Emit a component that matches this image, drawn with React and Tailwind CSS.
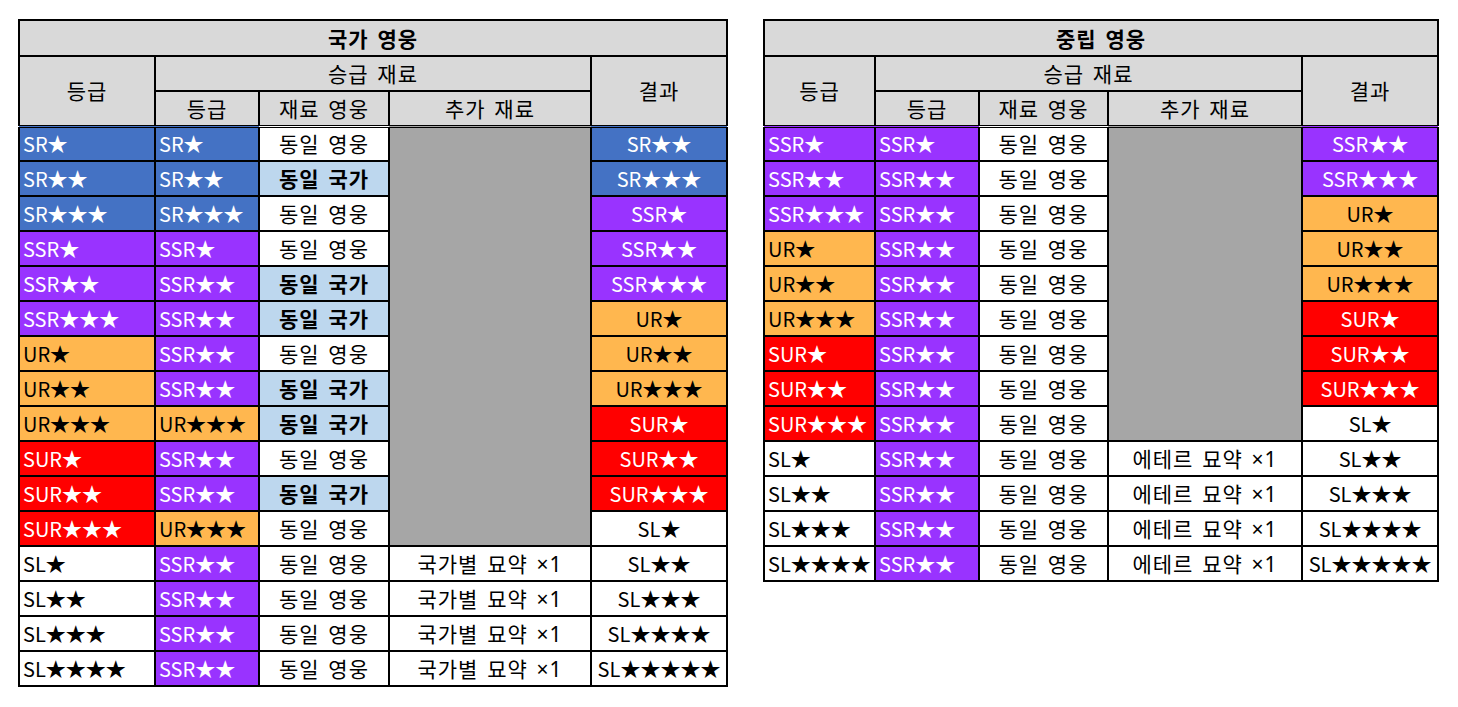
const BLUE = "bg-[#4472c4] text-white";
const PURPLE = "bg-[#9933ff] text-white";
const ORANGE = "bg-[#ffb74f] text-black";
const RED = "bg-[#ff0000] text-white";
const WHITE = "bg-white text-black";

const tone = (g) => {
  if (g.startsWith("SSR")) return PURPLE;
  if (g.startsWith("SR")) return BLUE;
  if (g.startsWith("SUR")) return RED;
  if (g.startsWith("UR")) return ORANGE;
  return WHITE;
};

const nationRows = [
  ["SR★", "SR★", "영웅", "SR★★"],
  ["SR★★", "SR★★", "국가", "SR★★★"],
  ["SR★★★", "SR★★★", "영웅", "SSR★"],
  ["SSR★", "SSR★", "영웅", "SSR★★"],
  ["SSR★★", "SSR★★", "국가", "SSR★★★"],
  ["SSR★★★", "SSR★★", "국가", "UR★"],
  ["UR★", "SSR★★", "영웅", "UR★★"],
  ["UR★★", "SSR★★", "국가", "UR★★★"],
  ["UR★★★", "UR★★★", "국가", "SUR★"],
  ["SUR★", "SSR★★", "영웅", "SUR★★"],
  ["SUR★★", "SSR★★", "국가", "SUR★★★"],
  ["SUR★★★", "UR★★★", "영웅", "SL★"],
  ["SL★", "SSR★★", "영웅", "SL★★", "국가별 묘약"],
  ["SL★★", "SSR★★", "영웅", "SL★★★", "국가별 묘약"],
  ["SL★★★", "SSR★★", "영웅", "SL★★★★", "국가별 묘약"],
  ["SL★★★★", "SSR★★", "영웅", "SL★★★★★", "국가별 묘약"],
];

const neutralRows = [
  ["SSR★", "SSR★", "영웅", "SSR★★"],
  ["SSR★★", "SSR★★", "영웅", "SSR★★★"],
  ["SSR★★★", "SSR★★", "영웅", "UR★"],
  ["UR★", "SSR★★", "영웅", "UR★★"],
  ["UR★★", "SSR★★", "영웅", "UR★★★"],
  ["UR★★★", "SSR★★", "영웅", "SUR★"],
  ["SUR★", "SSR★★", "영웅", "SUR★★"],
  ["SUR★★", "SSR★★", "영웅", "SUR★★★"],
  ["SUR★★★", "SSR★★", "영웅", "SL★"],
  ["SL★", "SSR★★", "영웅", "SL★★", "에테르 묘약"],
  ["SL★★", "SSR★★", "영웅", "SL★★★", "에테르 묘약"],
  ["SL★★★", "SSR★★", "영웅", "SL★★★★", "에테르 묘약"],
  ["SL★★★★", "SSR★★", "영웅", "SL★★★★★", "에테르 묘약"],
];

const cell = "border-2 border-black p-0 align-middle";
// Korean text in the sheet runs wider than Noto's hangul
const ko = "text-[21px] tracking-[1px] [word-spacing:3px]";
const head = `${cell} ${ko} bg-[#d9d9d9] text-center`;

function UpgradeTable({ title, widths, rows, grayRows }) {
  const total = widths.reduce((a, b) => a + b, 0);
  return (
    <table
      className="table-fixed border-collapse text-[20px] leading-none"
      style={{ width: total }}
    >
      <colgroup>
        {widths.map((w, i) => (
          <col key={i} style={{ width: w }} />
        ))}
      </colgroup>
      <thead>
        <tr className="h-[36px]">
          <th colSpan={5} className={`${head} font-bold`}>
            {title}
          </th>
        </tr>
        <tr className="h-[35px]">
          <th rowSpan={2} className={`${head} font-normal`}>등급</th>
          <th colSpan={3} className={`${head} font-normal`}>승급 재료</th>
          <th rowSpan={2} className={`${head} font-normal`}>결과</th>
        </tr>
        <tr className="h-[35px]">
          <th className={`${head} font-normal`}>등급</th>
          <th className={`${head} font-normal`}>재료 영웅</th>
          <th className={`${head} font-normal`}>추가 재료</th>
        </tr>
      </thead>
      <tbody>
        {rows.map(([grade, mat, kind, result, extra], i) => {
          const top = i === 0 ? "border-t-[3px] border-t-black border-double" : "";
          const nation = kind === "국가";
          return (
            <tr key={i} className="h-[35px]">
              <td className={`${cell} ${top} ${tone(grade)} pl-[3px] text-left`}>{grade}</td>
              <td className={`${cell} ${top} ${tone(mat)} pl-[3px] text-left`}>{mat}</td>
              <td
                className={`${cell} ${top} ${ko} text-center ${
                  nation ? "bg-[#bdd7ee] font-bold" : "bg-white"
                }`}
              >
                {nation ? "동일 국가" : "동일 영웅"}
              </td>
              {i === 0 && (
                <td rowSpan={grayRows} className={`${cell} ${top} bg-[#a6a6a6]`} />
              )}
              {extra && (
                <td className={`${cell} ${ko} bg-white text-center`}>
                  {extra}{" "}
                  <span className="font-['Noto_Sans'] tracking-[1px]">×1</span>
                </td>
              )}
              <td className={`${cell} ${top} ${tone(result)} text-center`}>{result}</td>
            </tr>
          );
        })}
      </tbody>
    </table>
  );
}

export default function App() {
  return (
    <div
      className="min-h-screen bg-white text-black pl-[18px] pt-[19px] flex items-start gap-[35px]"
      style={{ fontFamily: '"Noto Sans CJK KR", "Noto Sans", sans-serif' }}
    >
      <UpgradeTable
        title="국가 영웅"
        widths={[136, 104, 130, 202, 136]}
        rows={nationRows}
        grayRows={12}
      />
      <UpgradeTable
        title="중립 영웅"
        widths={[111, 104, 129, 194, 136]}
        rows={neutralRows}
        grayRows={9}
      />
    </div>
  );
}
